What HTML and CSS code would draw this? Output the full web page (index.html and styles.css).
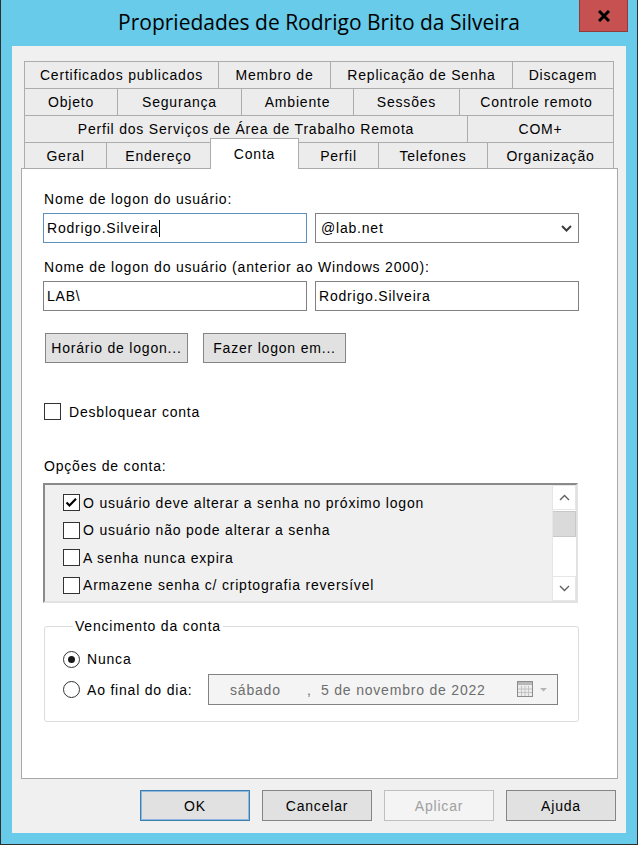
FILE: index.html
```html
<!DOCTYPE html>
<html lang="pt-BR">
<head>
<meta charset="utf-8">
<title>Propriedades de Rodrigo Brito da Silveira</title>
<link rel="stylesheet" href="styles.css">
</head>
<body>
<div class="window">
  <div class="titlebar">
    <div class="title">Propriedades de Rodrigo Brito da Silveira</div>
    <div class="close">
      <svg width="14" height="12" viewBox="0 0 14 12"><path d="M2 1 L12 11 M12 1 L2 11" stroke="#000" stroke-width="3" fill="none"/></svg>
    </div>
  </div>
  <div class="client">
    <div class="tabs">
      <div class="tabrow">
        <div class="tab t-cert">Certificados publicados</div>
        <div class="tab t-membro">Membro de</div>
        <div class="tab t-repl">Replicação de Senha</div>
        <div class="tab t-disc end">Discagem</div>
      </div>
      <div class="tabrow">
        <div class="tab t-obj">Objeto</div>
        <div class="tab t-seg">Segurança</div>
        <div class="tab t-amb">Ambiente</div>
        <div class="tab t-sess">Sessões</div>
        <div class="tab t-ctrl end">Controle remoto</div>
      </div>
      <div class="tabrow">
        <div class="tab t-rds">Perfil dos Serviços de Área de Trabalho Remota</div>
        <div class="tab t-com end">COM+</div>
      </div>
      <div class="tabrow last">
        <div class="tab t-geral">Geral</div>
        <div class="tab t-end">Endereço</div>
        <div class="tab t-conta active">Conta</div>
        <div class="tab t-perfil">Perfil</div>
        <div class="tab t-tel">Telefones</div>
        <div class="tab t-org end">Organização</div>
      </div>
    </div>

    <div class="panel">
      <div class="field-label">Nome de logon do usuário:</div>
      <div class="field-row">
        <div class="input focused">Rodrigo.Silveira<span class="caret"></span></div>
        <div class="input combo">
          <span>@lab.net</span>
          <svg class="combo-arrow" width="11" height="7" viewBox="0 0 11 7"><path d="M1 1 L5.5 5.5 L10 1" fill="none" stroke="#3c3c3c" stroke-width="2"/></svg>
        </div>
      </div>
      <div class="field-label second">Nome de logon do usuário (anterior ao Windows 2000):</div>
      <div class="field-row">
        <div class="input">LAB\</div>
        <div class="input">Rodrigo.Silveira</div>
      </div>

      <div class="btn-row">
        <div class="btn wide">Horário de logon...</div>
        <div class="btn wide">Fazer logon em...</div>
      </div>

      <div class="check-row unlock">
        <span class="checkbox"></span>
        <span>Desbloquear conta</span>
      </div>

      <div class="field-label options">Opções de conta:</div>
      <div class="listbox">
        <div class="list-items">
          <div class="list-item">
            <span class="checkbox checked">
              <svg width="13" height="11" viewBox="0 0 13 11"><path d="M1.5 5.5 L4.5 8.5 L11 1.8" stroke="#000" stroke-width="2.2" fill="none"/></svg>
            </span>
            <span>O usuário deve alterar a senha no próximo logon</span>
          </div>
          <div class="list-item">
            <span class="checkbox"></span>
            <span>O usuário não pode alterar a senha</span>
          </div>
          <div class="list-item">
            <span class="checkbox"></span>
            <span>A senha nunca expira</span>
          </div>
          <div class="list-item">
            <span class="checkbox"></span>
            <span>Armazene senha c/ criptografia reversível</span>
          </div>
        </div>
        <div class="scrollbar">
          <div class="sb-btn">
            <svg width="11" height="7" viewBox="0 0 11 7"><path d="M1 6 L5.5 1.5 L10 6" fill="none" stroke="#606060" stroke-width="1.4"/></svg>
          </div>
          <div class="sb-thumb"></div>
          <div class="sb-track"></div>
          <div class="sb-btn">
            <svg width="11" height="7" viewBox="0 0 11 7"><path d="M1 1 L5.5 5.5 L10 1" fill="none" stroke="#606060" stroke-width="1.4"/></svg>
          </div>
        </div>
      </div>

      <fieldset class="group">
        <legend>Vencimento da conta</legend>
        <div class="radio-row">
          <span class="radio selected"><span class="dot"></span></span>
          <span>Nunca</span>
        </div>
        <div class="radio-row date-row">
          <span class="radio"></span>
          <span class="radio-label">Ao final do dia:</span>
          <div class="datepicker">
            <span class="dp-day">sábado</span>
            <span class="dp-comma">,</span>
            <span class="dp-date">5 de novembro de 2022</span>
            <svg class="dp-icon" width="31" height="17" viewBox="0 0 31 17">
              <rect x="0.5" y="0.5" width="15" height="15" fill="#ececec" stroke="#8c8c8c"/>
              <rect x="1" y="1" width="14" height="3" fill="#b8b8b8"/>
              <path d="M4.5 5 V15 M8 5 V15 M11.5 5 V15 M1 8 H15 M1 11.5 H15" stroke="#c4c4c4" stroke-width="1"/>
              <path d="M23 7 L30 7 L26.5 10.5 Z" fill="#b4b4b4"/>
            </svg>
          </div>
        </div>
      </fieldset>
    </div>

    <div class="footer">
      <div class="btn dlg default">OK</div>
      <div class="btn dlg">Cancelar</div>
      <div class="btn dlg disabled">Aplicar</div>
      <div class="btn dlg">Ajuda</div>
    </div>
  </div>
</div>
</body>
</html>
```

FILE: styles.css
```css
* { box-sizing: border-box; }
html, body { margin: 0; padding: 0; }
body {
  width: 638px;
  height: 845px;
  overflow: hidden;
  background: #ffffff;
  font-family: "Liberation Sans", Arial, sans-serif;
  font-size: 14px;
  letter-spacing: 0.8px;
  color: #000;
}

.window {
  width: 638px;
  height: 845px;
  background: #67cbe9;
  border: 1px solid #2e2e2e;
  border-top: 0;
  padding: 0 11px 11px 11px;
  display: flex;
  flex-direction: column;
}

/* ---------- title bar ---------- */
.titlebar {
  height: 46px;
  margin: 0 -11px;
  display: grid;
  grid-template-columns: 1fr auto 1fr;
}
.title {
  grid-column: 2;
  align-self: center;
  font-family: "Open Sans", "Noto Sans", sans-serif;
  font-size: 21px;
  letter-spacing: 0;
  color: #000;
  white-space: nowrap;
  padding-bottom: 2px;
}
.close {
  grid-column: 3;
  justify-self: end;
  align-self: start;
  margin-right: 9px;
  width: 49px;
  height: 32px;
  background: #c75050;
  border: 1px solid #8f3b3b;
  border-top: 0;
  display: flex;
  align-items: center;
  justify-content: center;
}

/* ---------- client ---------- */
.client {
  flex: 1;
  background: #f0f0f0;
  padding: 15px 0 0 9px;
  display: flex;
  flex-direction: column;
}

/* ---------- tabs ---------- */
.tabs { margin-left: 3px; }
.tabrow {
  display: flex;
  height: 27px;
}
.tabrow.last { height: 26px; }
.tab {
  height: 100%;
  border: 1px solid #acacac;
  border-bottom: 0;
  border-right: 0;
  background: #ececec;
  display: flex;
  align-items: center;
  justify-content: center;
  white-space: nowrap;
  flex: none;
}
.tab.end { border-right: 1px solid #acacac; }
.tab.active {
  position: relative;
  z-index: 2;
  background: #fff;
  border-right: 1px solid #acacac;
  margin-top: -4px;
  height: 31px;
  margin-right: -1px;
  padding-bottom: 1px;
}

.t-cert { width: 194px; }
.t-membro { width: 112px; }
.t-repl { width: 182px; }
.t-disc { width: 102px; }
.t-obj { width: 93px; }
.t-seg { width: 124px; }
.t-amb { width: 112px; }
.t-sess { width: 106px; }
.t-ctrl { width: 155px; }
.t-rds { width: 443px; }
.t-com { width: 147px; }
.t-geral { width: 82px; }
.t-end { width: 104px; }
.t-conta { width: 89px; }
.t-perfil { width: 80px; }
.t-tel { width: 109px; }
.t-org { width: 127px; }

/* ---------- panel ---------- */
.panel {
  width: 597px;
  height: 611px;
  background: #fff;
  border: 1px solid #a9a9a9;
  padding: 22px 0 0 21px;
  position: relative;
  z-index: 1;
}

.field-label {
  line-height: 17px;
  padding-left: 1px;
  white-space: nowrap;
}
.field-label.second { margin-top: 16px; }

.field-row {
  display: flex;
  gap: 8px;
  margin-top: 5px;
}
.input {
  width: 264px;
  height: 30px;
  border: 1px solid #828282;
  background: #fff;
  padding-left: 3px;
  display: flex;
  align-items: center;
  white-space: nowrap;
}
.input.focused { border-color: #5f8fbf; }
.caret {
  display: inline-block;
  width: 1px;
  height: 17px;
  background: #000;
  margin-left: 0;
}
.input.combo {
  padding-left: 5px;
  padding-right: 6px;
  justify-content: space-between;
}

.btn-row {
  display: flex;
  gap: 15px;
  margin-top: 22px;
  margin-left: 2px;
}
.btn {
  height: 30px;
  background: #e1e1e1;
  border: 1px solid #858585;
  display: flex;
  align-items: center;
  justify-content: center;
  white-space: nowrap;
}
.btn.wide { width: 143px; }

.check-row {
  display: flex;
  align-items: center;
  gap: 8px;
  height: 17px;
  margin-top: 40px;
  margin-left: 1px;
}
.checkbox {
  width: 17px;
  height: 17px;
  border: 1px solid #333;
  background: #fff;
  flex: none;
  display: flex;
  align-items: center;
  justify-content: center;
}

.field-label.options { margin-top: 38px; }

/* ---------- listbox ---------- */
.listbox {
  margin-top: 8px;
  width: 535px;
  height: 120px;
  background: #f0f0f0;
  border: 2px solid;
  border-color: #8a8a8a #e2e2e2 #e2e2e2 #8a8a8a;
  display: flex;
}
.list-items {
  flex: 1;
  padding-top: 4px;
  padding-left: 18px;
}
.list-item {
  height: 27.5px;
  display: flex;
  align-items: center;
  gap: 3px;
  white-space: nowrap;
}
.scrollbar {
  width: 24px;
  background: #fff;
  display: flex;
  flex-direction: column;
  border-left: 1px solid #e6e6e6;
}
.sb-btn {
  height: 25px;
  display: flex;
  align-items: center;
  justify-content: center;
  border: 1px solid #e6e6e6;
  border-left: 0;
}
.sb-thumb {
  height: 26px;
  margin-top: 1px;
  background: #dadada;
  border: 1px solid #c8c8c8;
  border-left: 0;
}
.sb-track { flex: 1; }

/* ---------- group box ---------- */
.group {
  margin: 15px 0 0 1px;
  width: 535px;
  border: 1px solid #dcdcdc;
  border-radius: 3px;
  padding: 0 0 16px 18px;
  min-width: 0;
}
.group legend {
  margin-left: 10px;
  padding: 0 2px;
  line-height: 17px;
  white-space: nowrap;
}
.radio-row {
  display: flex;
  align-items: center;
  gap: 7px;
  height: 20px;
  margin-top: 14px;
  white-space: nowrap;
}
.radio-row.date-row {
  height: 31px;
  margin-top: 5px;
}
.radio {
  width: 17px;
  height: 17px;
  border: 1px solid #333;
  border-radius: 50%;
  background: #fff;
  flex: none;
  display: flex;
  align-items: center;
  justify-content: center;
}
.radio .dot {
  width: 7px;
  height: 7px;
  border-radius: 50%;
  background: #1a1a1a;
}
.radio-label {
  width: 114px;
  flex: none;
}
.datepicker {
  width: 350px;
  height: 31px;
  border: 1px solid #828282;
  background: #f4f4f4;
  color: #6d6d6d;
  display: flex;
  align-items: center;
  padding-left: 21px;
  padding-right: 9px;
}
.dp-day { width: 77px; flex: none; }
.dp-comma { width: 14px; flex: none; }
.dp-icon { margin-left: auto; }

/* ---------- footer ---------- */
.footer {
  display: flex;
  justify-content: flex-end;
  gap: 12px;
  margin-top: 11px;
  margin-right: 10px;
}
.btn.dlg {
  width: 110px;
  height: 31px;
}
.btn.default {
  border-color: #3c7fb1;
  box-shadow: inset 0 0 0 1px #8fb8e0;
}
.btn.disabled {
  background: #f4f4f4;
  border-color: #bfbfbf;
  color: #a0a0a0;
}
```
